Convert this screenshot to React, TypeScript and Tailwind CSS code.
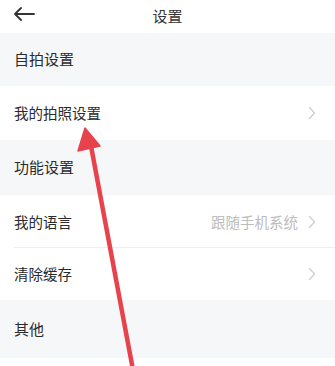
import React from "react";

function Chevron() {
  return (
    <svg width="8" height="14" viewBox="0 0 8 14" fill="none" className="ml-[10px]">
      <path d="M1.5 1.5L6.5 7L1.5 12.5" stroke="#cfcfcf" strokeWidth="1.4" strokeLinecap="round" strokeLinejoin="round" />
    </svg>
  );
}

function Section({ title, h }: { title: string; h: string }) {
  return (
    <div className={`flex items-center bg-[#f6f7f9] px-[14px] text-[15px] text-[#2b2b2b] ${h}`}>{title}</div>
  );
}

function Row({ label, value, h, divider }: { label: string; value?: string; h: string; divider?: boolean }) {
  return (
    <div className={`relative flex items-center bg-white pl-[14px] pr-[19px] text-[14.5px] text-[#2b2b2b] ${h}`}>
      <span className="flex-1">{label}</span>
      {value && <span className="text-[14.5px] text-[#bdbdbd]">{value}</span>}
      <Chevron />
      {divider && <div className="absolute bottom-0 left-[14px] right-0 h-px bg-[#eeeeee]" />}
    </div>
  );
}

export default function App() {
  return (
    <div
      className="relative h-[366px] w-[335px] overflow-hidden bg-white"
      style={{ fontFamily: '"Noto Sans CJK SC", "Noto Sans", sans-serif' }}
    >
      <div className="relative flex h-[33px] items-center justify-center bg-white">
        <svg className="absolute left-[12px] top-[6px]" width="24" height="16" viewBox="0 0 24 16" fill="none">
          <path d="M22 8H3M9 2L3 8L9 14" stroke="#333" strokeWidth="1.8" strokeLinecap="round" strokeLinejoin="round" />
        </svg>
        <span className="text-[15px] text-[#333]">设置</span>
      </div>
      <Section title="自拍设置" h="h-[53px]" />
      <Row label="我的拍照设置" h="h-[54px]" />
      <Section title="功能设置" h="h-[55px]" />
      <Row label="我的语言" value="跟随手机系统" h="h-[53px]" divider />
      <Row label="清除缓存" h="h-[52px]" />
      <Section title="其他" h="h-[58px]" />

      <svg className="pointer-events-none absolute left-0 top-0" width="335" height="366" viewBox="0 0 335 366">
        <path d="M91 146 L133 370" stroke="#e8434d" strokeWidth="4.5" strokeLinecap="round" />
        <path d="M85 128 L78 151 L100 146 Z" fill="#e8434d" stroke="#e8434d" strokeWidth="1.5" strokeLinejoin="round" />
      </svg>
    </div>
  );
}
